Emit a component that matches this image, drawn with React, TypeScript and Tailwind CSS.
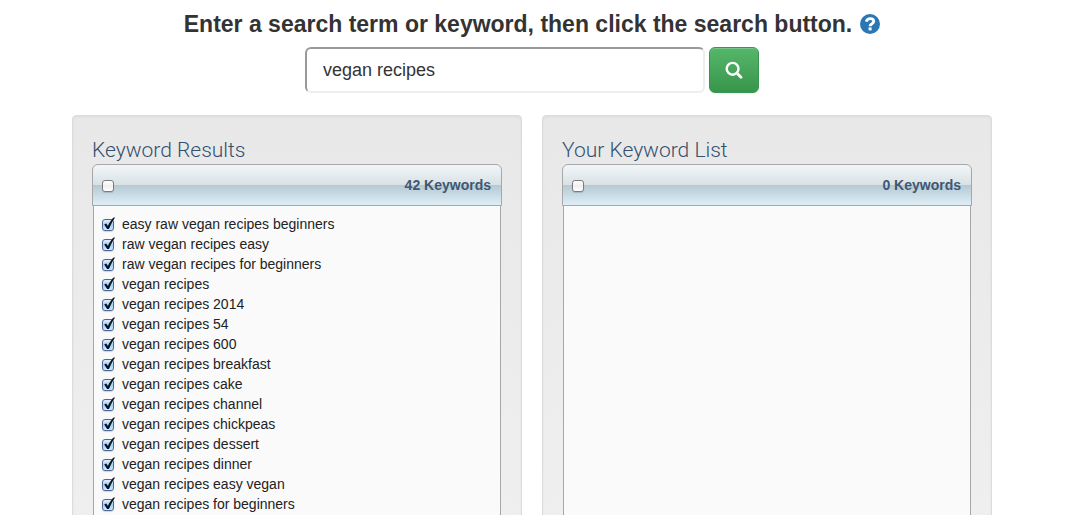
import { useState, type ReactNode } from "react";

const KEYWORDS = [
  "easy raw vegan recipes beginners",
  "raw vegan recipes easy",
  "raw vegan recipes for beginners",
  "vegan recipes",
  "vegan recipes 2014",
  "vegan recipes 54",
  "vegan recipes 600",
  "vegan recipes breakfast",
  "vegan recipes cake",
  "vegan recipes channel",
  "vegan recipes chickpeas",
  "vegan recipes dessert",
  "vegan recipes dinner",
  "vegan recipes easy vegan",
  "vegan recipes for beginners",
];

function Checkbox({ label, defaultChecked = false }: { label?: string; defaultChecked?: boolean }) {
  return (
    <span className="relative mt-0.5 flex size-3 shrink-0">
      <input
        type="checkbox"
        aria-label={label}
        defaultChecked={defaultChecked}
        className="peer size-3 appearance-none rounded-[3px] border border-[#7c7c80] bg-linear-to-b from-white via-[#f0f0f0] to-white shadow-[0_1px_1px_rgba(0,0,0,0.15)] checked:border-[#4f639b] checked:from-[#e3effb] checked:via-[#9fcdf3] checked:to-[#c9f2ff]"
      />
      <svg
        viewBox="0 0 14 15"
        className="pointer-events-none absolute -top-0.5 left-0 hidden h-[15px] w-[14px] overflow-visible peer-checked:block"
        aria-hidden="true"
      >
        <path d="M2.2 7.4 L4.2 6.4 L5.9 9 C7.4 5.8 9.2 2.8 11.2 0.8 L13.2 0.6 C10.8 3.8 8.8 7.6 7 12 L5.1 12 Z" fill="#0b1422" />
      </svg>
    </span>
  );
}

function Panel({ title, count, children }: { title: string; count: number; children?: ReactNode }) {
  return (
    <section className="flex flex-1 flex-col rounded border border-[#dcdcdc] bg-linear-to-b from-[#e8e8e8] to-[#f5f5f5] px-[19px] pt-5 pb-[19px] shadow-[inset_0_1px_3px_rgba(0,0,0,0.05)]">
      <h2 className="font-[Roboto,Liberation_Sans,sans-serif] text-[21px] leading-7 font-light text-[#34506e]">{title}</h2>
      <div className="flex h-[42px] items-center justify-between rounded-t-md border border-[#a5a7a9] bg-[linear-gradient(to_bottom,#f2f6f9_0%,#d8e1e4_50%,#b5c9d2_50%,#ddeef7_100%)] pr-[10px] pl-[9px]">
        <Checkbox label={"Select all in " + title} />
        <span className="text-sm font-bold text-[#3d5875]">{count} Keywords</span>
      </div>
      <div className="mx-px min-h-[640px] border-x border-b border-[#a5a7a9] bg-[#fafafa] px-2 pt-2">{children}</div>
    </section>
  );
}

export default function App() {
  const [term, setTerm] = useState("vegan recipes");

  return (
    <main className="h-screen overflow-hidden bg-white pr-[11px] font-[Liberation_Sans,Arial,sans-serif] text-[#333]">
      <div className="mx-auto max-w-[920px]">
        <h1 className="flex items-center justify-center gap-2 pt-1 text-[23px] leading-10 font-bold">
          <label htmlFor="term">Enter a search term or keyword, then click the search button.</label>
          <a href="#help" aria-label="Help">
            <svg viewBox="0 0 20 20" className="size-5" aria-hidden="true">
              <circle cx="10" cy="10" r="10" fill="#2a77b4" />
              <path d="M6.3 7.6C6.9 5.5 8.2 4.6 10.1 4.6C12.3 4.6 13.7 5.8 13.7 7.4C13.7 9.8 10.1 9.6 10.1 12.2" fill="none" stroke="#fff" strokeWidth="2.9" />
              <rect x="8.6" y="13.4" width="3" height="3" fill="#fff" />
            </svg>
          </a>
        </h1>

        <form className="mt-[3px] flex justify-center gap-1" onSubmit={(e) => e.preventDefault()}>
          <input
            id="term"
            type="text"
            value={term}
            onChange={(e) => setTerm(e.target.value)}
            className="h-[46px] w-[400px] rounded-md border-2 border-t-[#999] border-r-[#eee] border-b-[#eee] border-l-[#999] bg-white px-4 text-lg text-[#333] outline-none"
          />
          <button
            type="submit"
            aria-label="Search"
            className="flex h-[46px] w-[50px] items-center justify-center rounded-md border border-[#3a9550] bg-linear-to-b from-[#55b76a] to-[#38954c] shadow-[inset_0_1px_0_rgba(255,255,255,0.2),0_1px_2px_rgba(0,0,0,0.05)]"
          >
            <svg viewBox="0 0 18 18" className="size-[18px]" aria-hidden="true">
              <circle cx="7.6" cy="7.8" r="5.9" fill="none" stroke="#fff" strokeWidth="2.4" />
              <path d="M12 12.2L16 16.2" stroke="#fff" strokeWidth="2.8" strokeLinecap="round" />
            </svg>
          </button>
        </form>

        <div className="mt-[22px] flex items-stretch gap-5">
          <Panel title="Keyword Results" count={42}>
            <ul>
              {KEYWORDS.map((keyword) => (
                <li key={keyword}>
                  <label className="flex items-center gap-2 text-sm leading-5 text-[#222]">
                    <Checkbox defaultChecked />
                    {keyword}
                  </label>
                </li>
              ))}
            </ul>
          </Panel>
          <Panel title="Your Keyword List" count={0} />
        </div>
      </div>
    </main>
  );
}
